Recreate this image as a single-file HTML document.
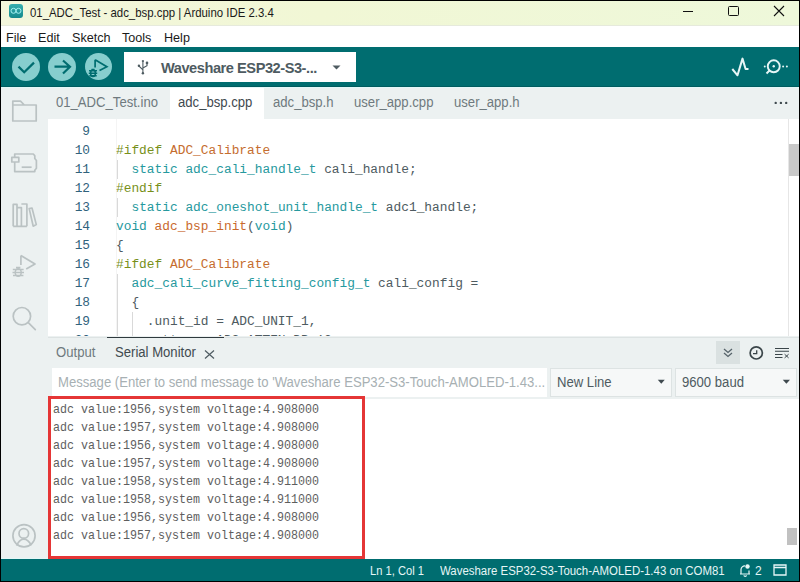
<!DOCTYPE html>
<html><head><meta charset="utf-8">
<style>
*{margin:0;padding:0;box-sizing:border-box}
html,body{width:800px;height:582px;overflow:hidden;background:#000}
body{position:relative;font-family:"Liberation Sans",sans-serif}
.a{position:absolute}
#win{position:absolute;left:1px;top:1px;width:798px;height:580px;background:#ecf1f1;overflow:hidden}
#title{left:0;top:0;width:798px;height:25px;background:linear-gradient(to right,#f3f6dc,#f1f7d5 40%,#eef8da)}
#menu{left:0;top:25px;width:798px;height:21px;background:#fff}
#tool{left:0;top:46px;width:798px;height:40px;background:#006d70}
#tabs{left:47px;top:86px;width:751px;height:32px;background:#ecf1f1}
#editor{left:47px;top:118px;width:751px;height:217px;background:#fff;overflow:hidden}
#status{left:0;top:558px;width:798px;height:22px;background:#006d70}
.txt{white-space:pre;position:absolute}
.ui{font-size:13.8px;line-height:16px;transform:scaleX(.95);transform-origin:0 0}
.mono{font-family:"Liberation Mono",monospace}
.ln{position:absolute;left:0;width:42px;text-align:right;color:#30627c;font-family:"Liberation Mono",monospace;font-size:12.8px;line-height:19px}
.cl{position:absolute;left:68px;white-space:pre;color:#4e5b61;font-family:"Liberation Mono",monospace;font-size:12.85px;line-height:19px}
.k{color:#26999e}.p{color:#77901a}.f{color:#c9692c}.m{color:#c56d2e}
.guide{position:absolute;width:1px;background:#d9d9d9}
.circ{position:absolute;width:28px;height:28px;border-radius:50%;background:#87cece}
.sline{position:absolute;left:5px;white-space:pre;font-family:"Liberation Mono",monospace;font-size:12.6px;line-height:18px;color:#5e5e5e;transform:scaleX(.926);transform-origin:0 0}
</style></head><body>
<div id="win">
  <!-- title bar -->
  <div id="title" class="a">
    <div class="a" style="left:8px;top:3.2px;width:14px;height:13.5px;border-radius:3px;background:linear-gradient(#35aeb0,#15898c)">
      <svg width="14" height="14" viewBox="0 0 14 14" style="position:absolute;left:0;top:0"><g fill="none" stroke="#a6f2f2" stroke-width="1"><ellipse cx="4.5" cy="6.8" rx="2.5" ry="2.5"/><ellipse cx="9.5" cy="6.8" rx="2.5" ry="2.5"/></g></svg>
    </div>
    <div class="txt" style="left:29px;top:4.5px;font-size:12.4px;line-height:14px;color:#1a1a1a;transform:scaleX(.92);transform-origin:0 0">01_ADC_Test - adc_bsp.cpp | Arduino IDE 2.3.4</div>
    <div class="a" style="left:682px;top:10px;width:10px;height:1px;background:#111"></div>
    <div class="a" style="left:727px;top:5px;width:11px;height:10px;border:1px solid #111;border-radius:1.5px"></div>
    <svg class="a" style="left:772px;top:4px" width="12" height="12" viewBox="0 0 12 12"><path d="M1 1L11 11M11 1L1 11" stroke="#111" stroke-width="1.1"/></svg>
  </div>
  <div class="a" style="left:0;top:24px;width:798px;height:1px;background:#e6eadc"></div>
  <!-- menu -->
  <div id="menu" class="a">
    <div class="txt" style="left:5px;top:5px;font-size:12.6px;line-height:14px;color:#1a1a1a">File</div>
    <div class="txt" style="left:37px;top:5px;font-size:12.6px;line-height:14px;color:#1a1a1a">Edit</div>
    <div class="txt" style="left:71px;top:5px;font-size:12.6px;line-height:14px;color:#1a1a1a">Sketch</div>
    <div class="txt" style="left:121px;top:5px;font-size:12.6px;line-height:14px;color:#1a1a1a">Tools</div>
    <div class="txt" style="left:163px;top:5px;font-size:12.6px;line-height:14px;color:#1a1a1a">Help</div>
  </div>
  <!-- toolbar -->
  <div id="tool" class="a">
    <div class="circ" style="left:11px;top:6px"></div>
    <div class="circ" style="left:47px;top:6px"></div>
    <div class="circ" style="left:83.5px;top:6px;width:27px;height:27px"></div>
    <svg class="a" style="left:0;top:0" width="798" height="40" viewBox="0 0 798 40">
      <path d="M17.5 19.6L23.2 25.3L33 15.6" fill="none" stroke="#006d70" stroke-width="2.2"/>
      <path d="M53.5 19.7H69.5M62 13.5L69 19.7L62 26.5" fill="none" stroke="#006d70" stroke-width="2.2"/>
      <path d="M94.1 12.7V20.5M94.1 12.7L105.9 19.7L98.5 23.6" fill="none" stroke="#006d70" stroke-width="1.7"/>
      <g fill="none" stroke="#006d70" stroke-width="1.5"><ellipse cx="92" cy="26.3" rx="2.4" ry="3.2"/><path d="M88 23.8h8M87.8 26.3h8.4M88.3 28.8h7.4M90.5 22.5h3"/></g>
    </svg>
    <div class="a" style="left:123px;top:5px;width:232px;height:30px;background:#fff"></div>
    <svg class="a" style="left:136px;top:12px" width="14" height="16" viewBox="0 0 14 16"><g fill="none" stroke="#4e5b61" stroke-width="1.1"><path d="M5.9 2V14.3M1.9 7L5.9 10.8M10 4V6.6L5.9 9"/></g><circle cx="5.9" cy="14.3" r="1.2" fill="#4e5b61"/><rect x="4.9" y="1.2" width="2" height="1.6" fill="#4e5b61"/><circle cx="1.9" cy="6.8" r="1.2" fill="#4e5b61"/><circle cx="10" cy="3.9" r="1.3" fill="#4e5b61"/></svg>
    <div class="txt" style="left:160px;top:13px;font-size:14.6px;line-height:16px;font-weight:bold;color:#4e5b61;letter-spacing:-0.45px">Waveshare ESP32-S3-...</div>
    <svg class="a" style="left:331px;top:18px" width="9" height="5" viewBox="0 0 9 5"><path d="M0.5 0.5H8.5L4.5 4.5Z" fill="#4e5b61"/></svg>
    <!-- right icons -->
    <svg class="a" style="left:728px;top:8px" width="24" height="24" viewBox="0 0 24 24"><path d="M3.3 14L8.5 20.3L13.5 3.6L16.6 14H19.5" fill="none" stroke="#e6f6f6" stroke-width="2" stroke-linejoin="round"/></svg>
    <svg class="a" style="left:760px;top:8px" width="30" height="24" viewBox="0 0 30 24"><g fill="none" stroke="#e6f6f6" stroke-width="1.9"><circle cx="12.75" cy="11.3" r="6"/><path d="M8.5 15.5L5.5 18.5"/></g><circle cx="12.75" cy="11.3" r="1.2" fill="#e6f6f6"/><circle cx="3.75" cy="11.5" r="1" fill="#e6f6f6"/><circle cx="22.1" cy="11.5" r="1" fill="#e6f6f6"/><circle cx="25.9" cy="11.5" r="1" fill="#e6f6f6"/></svg>
  </div>
  <!-- sidebar icons -->
  <svg class="a" style="left:0;top:86px" width="47" height="472" viewBox="0 0 47 472">
    <g fill="none" stroke="#bac2c3" stroke-width="1.7" stroke-linejoin="round">
      <path d="M11.8 34V14.2H19.5L23.3 18H35.2V34Z M11.8 18H23.3"/>
      <path d="M13.7 67H32.3L33.8 68.8V71.5L35.4 73.5V81.3L33.8 83.2V84.6H13.7Z"/>
      <path d="M10.8 70.4H17.8V75H10.8Z" fill="#ecf1f1"/>
      <path d="M20.7 80.2H30.6"/>
      <path d="M12.2 139.3V117.4H16V139.3M16 120.6H20.4V139.3M20.4 117H25.9V139.3M12.2 139.3H25.9M28.2 121.6L31 121L35.3 137.6L32.2 139.2Z"/>
      <path d="M19.9 168.4V178M19.9 168.4L34 177L25.2 182"/>
      <circle cx="20.9" cy="229.2" r="8.7"/>
      <path d="M27.3 235.6L34.3 242.6" stroke-linecap="round"/>
      <circle cx="23" cy="448.8" r="11.1"/>
      <circle cx="22.8" cy="446.4" r="4.8"/>
      <path d="M15.6 458.6C17.5 454.5 20 452.2 22.8 452.2S28.3 454.5 30.3 458.4"/>
    </g>
    <g fill="none" stroke="#bac2c3" stroke-width="1.5"><ellipse cx="17.2" cy="185.5" rx="3" ry="3.8"/><path d="M11.8 182.6H22.6M11.5 185.5H23M12 188.6H22.4M15 180.5h4.4"/></g>
  </svg>
  <!-- tabs -->
  <div id="tabs" class="a">
    <div class="txt ui" style="left:7.5px;top:8px;color:#6f7a7e">01_ADC_Test.ino</div>
    <div class="a" style="left:122px;top:0;width:94px;height:32px;background:#fff"></div>
    <div class="txt ui" style="left:130px;top:8px;color:#3f4a4f">adc_bsp.cpp</div>
    <div class="txt ui" style="left:224.5px;top:8px;color:#6f7a7e">adc_bsp.h</div>
    <div class="txt ui" style="left:305.5px;top:8px;color:#6f7a7e">user_app.cpp</div>
    <div class="txt ui" style="left:405.5px;top:8px;color:#6f7a7e">user_app.h</div>
    <svg class="a" style="left:726px;top:14px" width="14" height="4" viewBox="0 0 14 4"><circle cx="1.7" cy="1.9" r="1.2" fill="#3f4a4f"/><circle cx="6.9" cy="1.9" r="1.2" fill="#3f4a4f"/><circle cx="12.2" cy="1.9" r="1.2" fill="#3f4a4f"/></svg>
  </div>
  <!-- editor -->
  <div id="editor" class="a">
    <div class="a" style="left:68px;top:0;width:1px;height:218px;background:#f4f4f4"></div>
    <div class="ln" style="top:3px">9</div>
    <div class="ln" style="top:22px">10</div>
    <div class="ln" style="top:41px">11</div>
    <div class="ln" style="top:60px">12</div>
    <div class="ln" style="top:79px">13</div>
    <div class="ln" style="top:98px">14</div>
    <div class="ln" style="top:117px">15</div>
    <div class="ln" style="top:136px">16</div>
    <div class="ln" style="top:155px">17</div>
    <div class="ln" style="top:174px">18</div>
    <div class="ln" style="top:193px">19</div>
    <div class="ln" style="top:212px">20</div>
    <div class="guide" style="left:69px;top:41px;height:19px"></div>
    <div class="guide" style="left:69px;top:79px;height:19px"></div>
    <div class="guide" style="left:69px;top:155px;height:76px"></div>
    <div class="guide" style="left:84px;top:193px;height:38px"></div>
    <div class="cl" style="top:22px"><span class="p">#ifdef</span> <span class="m">ADC_Calibrate</span></div>
    <div class="cl" style="top:41px">  <span class="k">static</span> <span class="k">adc_cali_handle_t</span> cali_handle;</div>
    <div class="cl" style="top:60px"><span class="p">#endif</span></div>
    <div class="cl" style="top:79px">  <span class="k">static</span> <span class="k">adc_oneshot_unit_handle_t</span> adc1_handle;</div>
    <div class="cl" style="top:98px"><span class="k">void</span> <span class="f">adc_bsp_init</span>(<span class="k">void</span>)</div>
    <div class="cl" style="top:117px">{</div>
    <div class="cl" style="top:136px"><span class="p">#ifdef</span> <span class="m">ADC_Calibrate</span></div>
    <div class="cl" style="top:155px">  <span class="k">adc_cali_curve_fitting_config_t</span> cali_config =</div>
    <div class="cl" style="top:174px">  {</div>
    <div class="cl" style="top:193px">    .unit_id = ADC_UNIT_1,</div>
    <div class="cl" style="top:212px">    .atten = ADC_ATTEN_DB_12,</div>
    <!-- scrollbar -->
    <div class="a" style="left:740px;top:0;width:1px;height:218px;background:#e6e6e6"></div>
    <div class="a" style="left:741px;top:24.5px;width:10px;height:32.5px;background:#c9c9c9"></div>
  </div>
  <!-- panel header -->
  <div class="a" style="left:47px;top:336px;width:751px;height:1px;background:#dde3e3"></div>
  <div class="a" style="left:106px;top:336px;width:117px;height:1px;background:#2f3a3e"></div>
  <div class="txt ui" style="left:55px;top:343.5px;color:#6f7a7e">Output</div>
  <div class="txt ui" style="left:114px;top:343.5px;color:#3f4a4f">Serial Monitor</div>
  <svg class="a" style="left:203px;top:348px" width="11" height="11" viewBox="0 0 11 11"><path d="M1 1.5L10 9.5M10 1.5L1 9.5" stroke="#4e5b61" stroke-width="1.2"/></svg>
  <div class="a" style="left:715px;top:340px;width:24px;height:23px;background:#dae1e1"></div>
  <svg class="a" style="left:721px;top:345px" width="12" height="12" viewBox="0 0 12 12"><path d="M2 3L6 6.5L10 3M2 7L6 10.5L10 7" fill="none" stroke="#56636a" stroke-width="1.3"/></svg>
  <svg class="a" style="left:747px;top:344px" width="16" height="16" viewBox="0 0 16 16"><circle cx="8.25" cy="7.9" r="6.1" fill="none" stroke="#3a4549" stroke-width="1.7"/><path d="M8.7 5.2V8.6H5" fill="none" stroke="#3a4549" stroke-width="1.3"/></svg>
  <svg class="a" style="left:774px;top:346px" width="16" height="14" viewBox="0 0 16 14"><path d="M0 1.5H14M0 4.25H14M0 7.5H7.5M0 10.5H7.5M9.6 7.2L13.6 10.9M13.6 7.2L9.6 10.9" fill="none" stroke="#3a4549" stroke-width="1"/></svg>
  <!-- message row -->
  <div class="a" style="left:51px;top:367px;width:495px;height:29px;background:#fff"></div>
  <div class="txt ui" style="left:57px;top:373.5px;color:#a7b0b3">Message (Enter to send message to 'Waveshare ESP32-S3-Touch-AMOLED-1.43...</div>
  <div class="a" style="left:549px;top:367px;width:122px;height:29px;background:#f6f8f8;border:1px solid #dde3e3"></div>
  <div class="txt ui" style="left:556px;top:373.5px;color:#4e5b61">New Line</div>
  <svg class="a" style="left:656px;top:378px" width="9" height="6" viewBox="0 0 9 6"><path d="M0.75 0.75H7.75L4.25 4.75Z" fill="#3f4a4f"/></svg>
  <div class="a" style="left:674px;top:367px;width:122px;height:29px;background:#f6f8f8;border:1px solid #dde3e3"></div>
  <div class="txt ui" style="left:681px;top:373.5px;color:#4e5b61">9600 baud</div>
  <svg class="a" style="left:781px;top:378px" width="9" height="6" viewBox="0 0 9 6"><path d="M0.75 0.75H8L4.4 4.75Z" fill="#3f4a4f"/></svg>
  <!-- serial output -->
  <div class="a" style="left:47px;top:398px;width:751px;height:160px;background:#fff;overflow:hidden">
    <div class="sline" style="top:2px">adc value:1956,system voltage:4.908000</div>
    <div class="sline" style="top:20px">adc value:1957,system voltage:4.908000</div>
    <div class="sline" style="top:38px">adc value:1956,system voltage:4.908000</div>
    <div class="sline" style="top:56px">adc value:1957,system voltage:4.908000</div>
    <div class="sline" style="top:74px">adc value:1958,system voltage:4.911000</div>
    <div class="sline" style="top:92px">adc value:1958,system voltage:4.911000</div>
    <div class="sline" style="top:110px">adc value:1956,system voltage:4.908000</div>
    <div class="sline" style="top:128px">adc value:1957,system voltage:4.908000</div>
    <div class="a" style="left:739px;top:129px;width:10px;height:17px;background:#c1c1c1"></div>
  </div>
  <div class="a" style="left:47px;top:395px;width:317px;height:163px;border:3px solid #e53636"></div>
  <div class="a" style="left:0;top:86px;width:798px;height:1px;background:#e3f8f8"></div>
  <div class="a" style="left:0;top:85px;width:798px;height:1px;background:#005c5f"></div>
  <div class="a" style="left:0;top:557px;width:47px;height:1px;background:#e3f8f8"></div>
  <!-- status bar -->
  <div id="status" class="a">
    <div class="txt" style="left:369px;top:4.5px;font-size:12px;line-height:14px;color:#e6f6f6;transform:scaleX(.93);transform-origin:0 0">Ln 1, Col 1</div>
    <div class="txt" style="left:439px;top:4.5px;font-size:12px;line-height:14px;color:#e6f6f6;transform:scaleX(.952);transform-origin:0 0">Waveshare ESP32-S3-Touch-AMOLED-1.43 on COM81</div>
    <svg class="a" style="left:737px;top:4px" width="14" height="14" viewBox="0 0 14 14"><path d="M3 10.5V6.5a3.8 3.8 0 0 1 4-3.6M11 7.5v3M2 11H12M6 12.2a1.2 1.2 0 0 0 2.4 0" fill="none" stroke="#e6f6f6" stroke-width="1.2"/><circle cx="9.5" cy="3.5" r="2.2" fill="#e6f6f6"/></svg>
    <div class="txt" style="left:754px;top:4.5px;font-size:12px;line-height:14px;color:#e6f6f6">2</div>
    <svg class="a" style="left:772px;top:5px" width="14" height="12" viewBox="0 0 14 12"><path d="M1 1H13V11H1Z M1 3.5H13" fill="none" stroke="#e6f6f6" stroke-width="1.3"/></svg>
  </div>
</div>
</body></html>
